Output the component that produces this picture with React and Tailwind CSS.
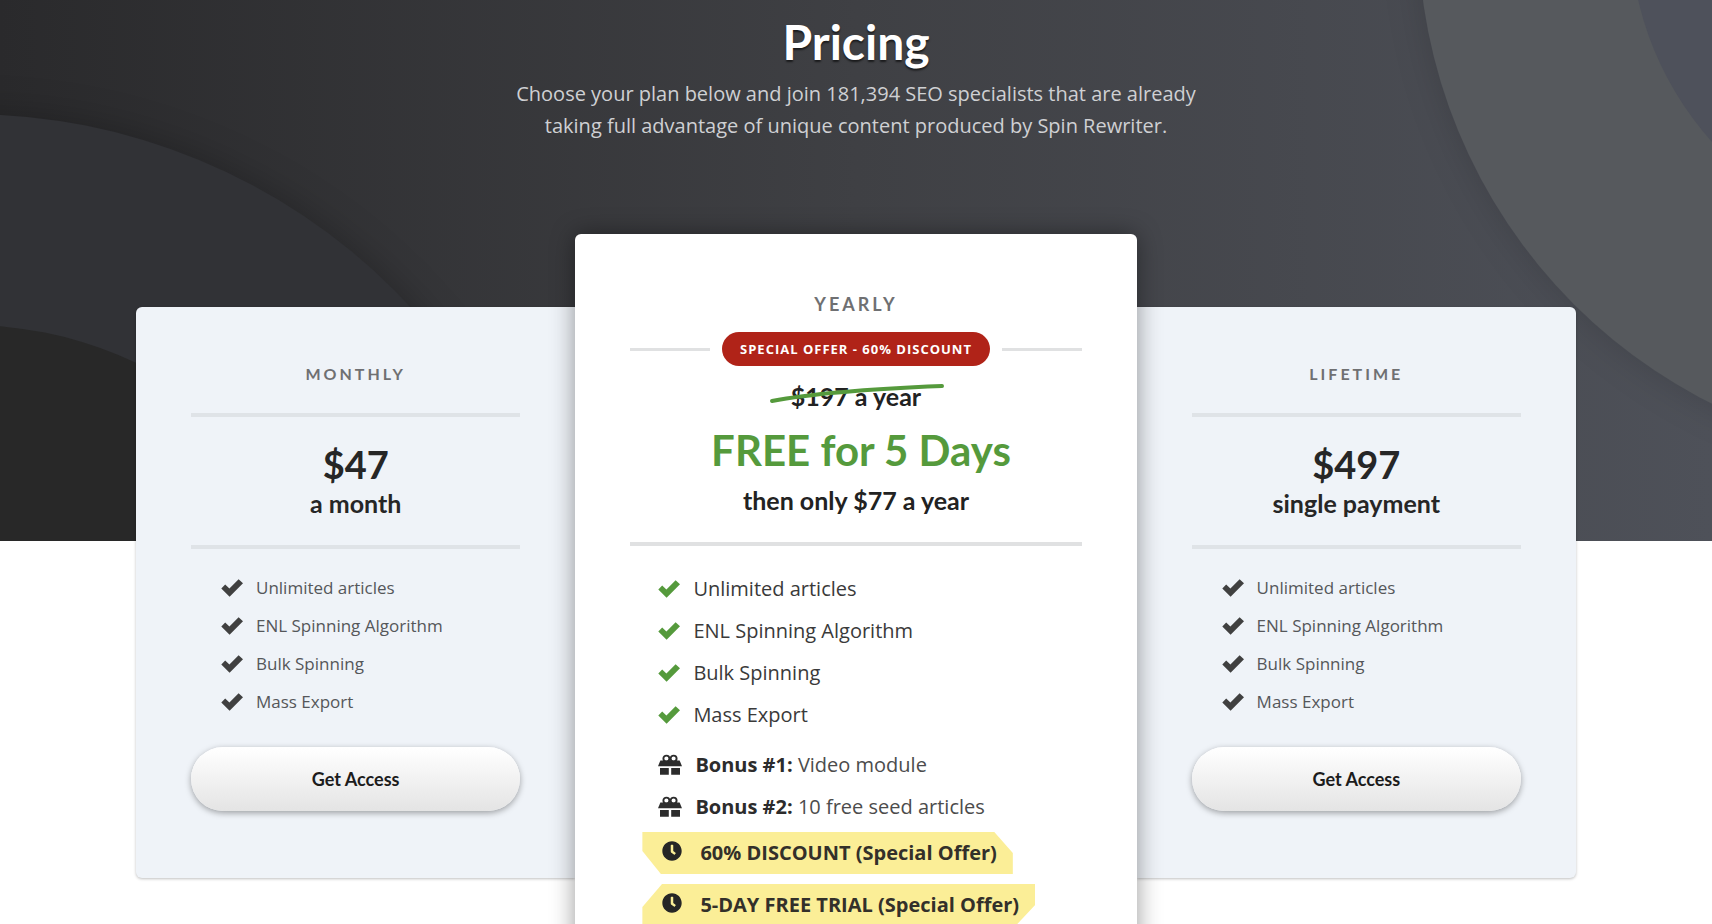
import { FaClock } from 'react-icons/fa';

const features = ['Unlimited articles', 'ENL Spinning Algorithm', 'Bulk Spinning', 'Mass Export'];

const bonuses = [
  { label: 'Bonus #1:', text: 'Video module' },
  { label: 'Bonus #2:', text: '10 free seed articles' }
];

function CheckIcon({ className }) {
  return (
    <svg viewBox="0 0 22 18" className={className} fill="currentColor" aria-hidden="true">
      <path d="M0.3 9.4 L4.2 5.6 L8.4 9.4 L17.6 0.3 L22 4.2 L8.6 17.8 Z" />
    </svg>
  );
}

function GiftIcon({ className }) {
  return (
    <svg viewBox="0 0 24 22" className={className} fill="currentColor" aria-hidden="true">
      <path d="M2.4 6.4 H21.6 L24 12.2 H0 Z" />
      <path d="M2 14 H10.8 V20.8 H2 Z M13.2 14 H22 V20.8 H13.2 Z" />
      <circle cx="8.4" cy="4.6" r="3" fill="none" stroke="currentColor" strokeWidth="1.9" />
      <circle cx="15.6" cy="4.6" r="3" fill="none" stroke="currentColor" strokeWidth="1.9" />
    </svg>
  );
}

function HeroBackground() {
  return (
    <div className="absolute inset-0 overflow-hidden" aria-hidden="true">
      <svg className="absolute left-0 top-0" width="640" height="541">
        <g className="drop-shadow-[0_0_18px_rgba(0,0,0,0.25)]">
          <circle cx="-32" cy="718" r="604" fill="#313236" />
        </g>
        <circle cx="-32" cy="718" r="393" fill="#282828" />
      </svg>
      <svg className="absolute right-0 top-0" width="400" height="541">
        <g className="drop-shadow-[0_0_18px_rgba(0,0,0,0.15)]">
          <circle cx="638" cy="-72" r="532" fill="#56595d" />
        </g>
        <circle cx="638" cy="-72" r="320" fill="#4e515b" />
      </svg>
    </div>
  );
}

function SidePlan({ name, price, period, rounded }) {
  return (
    <section
      className={`mt-[73px] bg-[#eff3f8] px-[55px] pt-[52px] pb-[67px] shadow-[0_1px_3px_rgba(0,0,0,0.25)] ${rounded}`}
    >
      <h2 className="text-center font-[Lato,sans-serif] text-base font-bold leading-[30px] tracking-[3px] text-[#6f7072]">
        {name}
      </h2>
      <hr className="mt-6 border-t-4 border-[#dfe3e7]" />
      <p className="mt-6 text-center font-[Lato,sans-serif] font-bold text-[#262626]">
        <span className="block text-[38px] leading-[46px]">{price}</span>
        <span className="block text-[25px] leading-8">{period}</span>
      </p>
      <hr className="mt-[26px] border-t-4 border-[#dfe3e7]" />
      <ul className="mt-5 pl-[30px]">
        {features.map((feature) => (
          <li key={feature} className="flex h-[38px] items-center gap-[13px] text-[17px] text-[#55575a]">
            <CheckIcon className="h-[18px] w-[22px] text-[#404040]" />
            {feature}
          </li>
        ))}
      </ul>
      <button
        type="button"
        className="mt-[26px] h-16 w-full rounded-full border-t border-white bg-linear-to-b from-white to-[#e4e4e4] pb-0.5 font-[Lato,sans-serif] text-lg font-bold text-[#1c1c1c] shadow-[0_2px_6px_rgba(0,0,0,0.35)]"
      >
        Get Access
      </button>
    </section>
  );
}

function YearlyPlan() {
  return (
    <section className="relative z-10 rounded-md bg-white px-[55px] pt-14 pb-16 shadow-[0_0_24px_rgba(0,0,0,0.4)]">
      <h2 className="text-center font-[Lato,sans-serif] text-lg font-bold leading-7 tracking-[3px] text-[#6f7072]">
        YEARLY
      </h2>

      <div className="mt-3.5 flex items-center gap-3">
        <span className="h-[3px] flex-1 bg-[#e0e1e2]" />
        <span className="h-[34px] rounded-full bg-[#b02318] px-[18px] text-[13px] font-bold leading-[34px] tracking-[1px] text-white">
          SPECIAL OFFER - 60% DISCOUNT
        </span>
        <span className="h-[3px] flex-1 bg-[#e0e1e2]" />
      </div>

      <div className="text-center font-[Lato,sans-serif] font-bold text-[#222]">
        <p className="mt-3.5 text-[25px] leading-8">
          <span className="relative inline-block">
            $197 a year
            {/* Hand-drawn strike */}
            <svg
              viewBox="0 0 176 24"
              className="absolute -left-[22px] top-0.5 h-6 w-44"
              fill="none"
              stroke="#559a3c"
              strokeWidth="4"
              strokeLinecap="round"
              aria-hidden="true"
            >
              <path d="M3 19 C45 11 100 7 173 4" />
            </svg>
          </span>
        </p>
        <p className="mt-3.5 pl-2.5 text-[42px] leading-[48px] text-[#559a3c]">FREE for 5 Days</p>
        <p className="mt-2.5 text-[25px] leading-8">then only $77 a year</p>
      </div>
      <hr className="mt-[26px] border-t-4 border-[#e0e1e2]" />

      <ul className="mt-[22px] pl-7 text-xl text-[#3a3a3a]">
        {features.map((feature) => (
          <li key={feature} className="flex h-[42px] items-center gap-[13px]">
            <CheckIcon className="h-[18px] w-[22px] text-[#559a3c]" />
            {feature}
          </li>
        ))}
      </ul>
      <ul className="mt-2 pl-7 text-xl text-[#4c4c4c]">
        {bonuses.map(({ label, text }) => (
          <li key={label} className="flex h-[42px] items-center gap-[13px]">
            <GiftIcon className="h-[22px] w-6 text-[#2c2c2c]" />
            <span>
              <strong className="font-bold text-[#2c2c2c]">{label}</strong> {text}
            </span>
          </li>
        ))}
      </ul>
      <ul className="mt-1 flex flex-col items-start gap-2.5 pl-3 text-xl font-bold text-[#33302a]">
        <li className="flex h-[42px] items-center gap-[18px] bg-[#fbee97] pl-5 pr-4 [clip-path:polygon(0_0,95%_0,100%_50%,100%_100%,5%_100%,0_45%)]">
          <FaClock className="mb-1 text-[#262626]" />
          60% DISCOUNT (Special Offer)
        </li>
        <li className="flex h-[42px] items-center gap-[18px] bg-[#fbee97] pl-5 pr-4 [clip-path:polygon(5%_0,100%_0,100%_50%,95%_100%,0_100%,0_55%)]">
          <FaClock className="mb-1 text-[#262626]" />
          5-DAY FREE TRIAL (Special Offer)
        </li>
      </ul>
    </section>
  );
}

export default function App() {
  return (
    <div className="h-screen overflow-hidden bg-white font-['Open_Sans',sans-serif]">
      <header className="relative h-[541px] bg-linear-to-r from-[#2a2a2c] via-[#3f4044] to-[#4e5159]">
        <HeroBackground />
        <div className="relative pt-3 text-center">
          <h1 className="font-[Lato,sans-serif] text-5xl font-bold leading-[60px] text-white [text-shadow:0_2px_2px_rgba(0,0,0,0.6)]">
            Pricing
          </h1>
          <p className="mx-auto mt-1.5 max-w-[700px] text-xl leading-8 text-[#cfd0d3]">
            Choose your plan below and join 181,394 SEO specialists that are already taking full advantage of unique
            content produced by Spin Rewriter.
          </p>
        </div>
      </header>

      <main className="relative mx-auto -mt-[307px] grid max-w-[1440px] grid-cols-[440fr_562fr_440fr] items-start">
        <SidePlan name="MONTHLY" price="$47" period="a month" rounded="rounded-l-md" />
        <YearlyPlan />
        <SidePlan name="LIFETIME" price="$497" period="single payment" rounded="rounded-r-md" />
      </main>
    </div>
  );
}
